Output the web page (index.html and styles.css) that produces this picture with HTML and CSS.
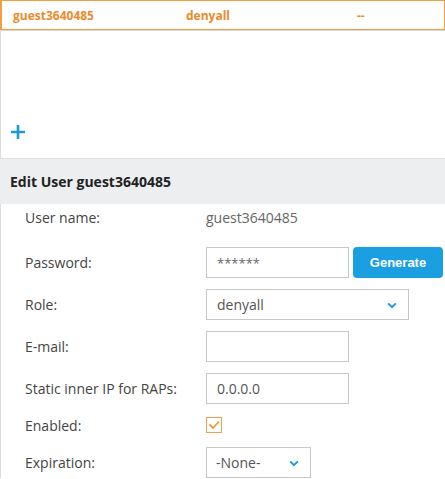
FILE: index.html
```html
<!DOCTYPE html>
<html>
<head>
<meta charset="utf-8">
<link rel="stylesheet" href="styles.css">
</head>
<body>
<div class="page">
  <div class="list">
    <div class="row-sel">
      <span class="c1">guest3640485</span>
      <span class="c2">denyall</span>
      <span class="c3">--</span>
    </div>
    <div class="list-space"></div>
    <div class="add">
      <svg width="16" height="16" viewBox="0 0 16 16"><path d="M8 1v14M1 8h14" stroke="#1b9ad8" stroke-width="2.6" fill="none"/></svg>
    </div>
  </div>
  <div class="head">Edit User guest3640485</div>
  <div class="form">
    <div class="frow r-user"><div class="lbl">User name:</div><div class="val">guest3640485</div></div>
    <div class="frow"><div class="lbl">Password:</div><div class="inp pw">******</div><div class="btn">Generate</div></div>
    <div class="frow"><div class="lbl">Role:</div><div class="sel wide">denyall<svg class="chev" width="10" height="7" viewBox="0 0 10 7"><path d="M1.2 1.4L5 5.2 8.8 1.4" stroke="#1b9ad8" stroke-width="2" fill="none"/></svg></div></div>
    <div class="frow"><div class="lbl">E-mail:</div><div class="inp"></div></div>
    <div class="frow"><div class="lbl">Static inner IP for RAPs:</div><div class="inp">0.0.0.0</div></div>
    <div class="frow r-chk"><div class="lbl">Enabled:</div><div class="chk"><svg width="14" height="14" viewBox="0 0 14 14"><path d="M2.5 6.5L6 10 12 3.5" stroke="#ef9a3c" stroke-width="1.8" fill="none"/></svg></div></div>
    <div class="frow"><div class="lbl">Expiration:</div><div class="sel short">-None-<svg class="chev" width="10" height="7" viewBox="0 0 10 7"><path d="M1.2 1.4L5 5.2 8.8 1.4" stroke="#1b9ad8" stroke-width="2" fill="none"/></svg></div></div>
  </div>
</div>
</body>
</html>
```
FILE: styles.css
```css
html, body { margin: 0; padding: 0; background: #fff; }
body { font-family: "Open Sans", "Liberation Sans", sans-serif; width: 445px; height: 479px; overflow: hidden; }
.page { width: 445px; }
.list { border-left: 1px solid #dcdcdc; }
.row-sel {
  height: 28px;
  border: 1px solid #f0a040;
  border-left: 2px solid #f0a040;
  margin-left: -1px;
  box-shadow: 0 1px 0 #d8d8d8;
  display: flex;
  align-items: center;
  font-size: 12px;
  font-weight: 700;
  color: #ec8a2a;
}
.c1 { margin-left: 11px; width: 173px; }
.c2 { width: 171px; }
.list-space { height: 91px; }
.add { height: 37px; padding-left: 9px; box-sizing: border-box; padding-top: 3px; }
.add svg { display: block; }
.head {
  height: 45px;
  background: #eceef0;
  border-top: 1px solid #dfe1e3;
  display: flex;
  align-items: center;
  padding-left: 10px;
  font-size: 14px;
  font-weight: 700;
  color: #222;
}
.form { border-left: 1px solid #dcdcdc; }
.frow { display: flex; align-items: center; height: 31px; margin-bottom: 11px; font-size: 14px; }
.r-user { height: 26px; margin-bottom: 17px; }
.r-chk { height: 28px; margin-top: -4px; margin-bottom: 8px; }
.lbl { width: 181px; padding-left: 24px; color: #444; }
.val { color: #666; }
.inp, .sel {
  box-sizing: border-box;
  height: 31px;
  border: 1px solid #c8c8c8;
  padding-left: 10px;
  display: flex;
  align-items: center;
  color: #555;
  font-size: 14px;
}
.pw { font-size: 13px; color: #666; }
.inp { width: 143px; }
.sel { position: relative; }
.wide { width: 203px; }
.short { width: 105px; padding-left: 9px; }
.chev { position: absolute; right: 11px; top: 12px; }
.btn {
  margin-left: 4px;
  width: 90px;
  height: 31px;
  background: #1a9fe0;
  border-radius: 4px;
  color: #fff;
  font-family: "Liberation Sans", Arial, sans-serif;
  font-weight: 700;
  font-size: 13px;
  display: flex;
  align-items: center;
  justify-content: center;
}
.chk {
  width: 16px; height: 16px; box-sizing: border-box;
  border: 1px solid #f0a050;
  display: flex; align-items: center; justify-content: center;
}
.chk svg { display: block; }
```
